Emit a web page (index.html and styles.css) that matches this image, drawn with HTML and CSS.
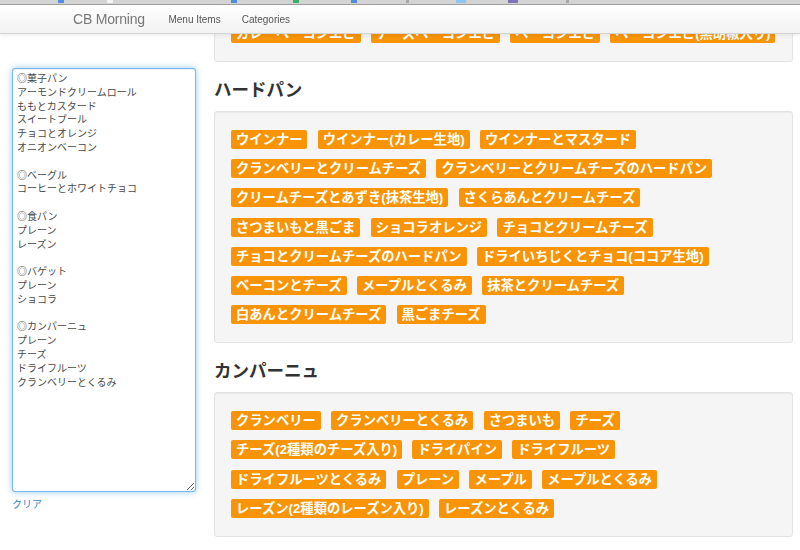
FILE: index.html
```html
<!DOCTYPE html>
<html lang="ja">
<head>
<meta charset="utf-8">
<title>CB Morning</title>
<link rel="stylesheet" href="styles.css">
</head>
<body>
<div class="chrome">
  <span class="bm bm-blue b1"></span>
  <span class="bm bm-white b2"></span>
  <span class="bm bm-blue b3"></span>
  <span class="bm bm-green b4"></span>
  <span class="bm bm-blue b5"></span>
  <span class="bm bm-gray b6"></span>
  <span class="bm bm-lblue b7"></span>
  <span class="bm bm-purple b8"></span>
  <span class="bm bm-gray b9"></span>
</div>
<nav class="navbar">
  <a class="brand" href="#">CB Morning</a>
  <a class="nav-link" href="#">Menu Items</a>
  <a class="nav-link" href="#">Categories</a>
</nav>
<div class="page">
  <aside class="sidebar">
    <textarea class="memo">◎菓子パン
アーモンドクリームロール
ももとカスタード
スイートブール
チョコとオレンジ
オニオンベーコン

◎ベーグル
コーヒーとホワイトチョコ

◎食パン
プレーン
レーズン

◎バゲット
プレーン
ショコラ

◎カンパーニュ
プレーン
チーズ
ドライフルーツ
クランベリーとくるみ</textarea>
    <a class="clear" href="#">クリア</a>
  </aside>
  <main class="main">
    <div class="well">
      <span class="label">カレーベーコンエピ</span>
      <span class="label">チーズベーコンエピ</span>
      <span class="label">ベーコンエピ</span>
      <span class="label">ベーコンエピ(黒胡椒入り)</span>
    </div>
    <h3 class="section-title">ハードパン</h3>
    <div class="well">
      <span class="label">ウインナー</span>
      <span class="label">ウインナー(カレー生地)</span>
      <span class="label">ウインナーとマスタード</span>
      <span class="label">クランベリーとクリームチーズ</span>
      <span class="label">クランベリーとクリームチーズのハードパン</span>
      <span class="label">クリームチーズとあずき(抹茶生地)</span>
      <span class="label">さくらあんとクリームチーズ</span>
      <span class="label">さつまいもと黒ごま</span>
      <span class="label">ショコラオレンジ</span>
      <span class="label">チョコとクリームチーズ</span>
      <span class="label">チョコとクリームチーズのハードパン</span>
      <span class="label">ドライいちじくとチョコ(ココア生地)</span>
      <span class="label">ベーコンとチーズ</span>
      <span class="label">メープルとくるみ</span>
      <span class="label">抹茶とクリームチーズ</span>
      <span class="label">白あんとクリームチーズ</span>
      <span class="label">黒ごまチーズ</span>
    </div>
    <h3 class="section-title">カンパーニュ</h3>
    <div class="well">
      <span class="label">クランベリー</span>
      <span class="label">クランベリーとくるみ</span>
      <span class="label">さつまいも</span>
      <span class="label">チーズ</span>
      <span class="label">チーズ(2種類のチーズ入り)</span>
      <span class="label">ドライパイン</span>
      <span class="label">ドライフルーツ</span>
      <span class="label">ドライフルーツとくるみ</span>
      <span class="label">プレーン</span>
      <span class="label">メープル</span>
      <span class="label">メープルとくるみ</span>
      <span class="label">レーズン(2種類のレーズン入り)</span>
      <span class="label">レーズンとくるみ</span>
    </div>
  </main>
</div>
</body>
</html>
```
FILE: styles.css
```css
html, body {
  margin: 0;
  padding: 0;
  background: #ffffff;
}
body {
  font-family: "Liberation Sans", "Noto Sans CJK JP", sans-serif;
  color: #333333;
}

/* top browser strip */
.chrome {
  position: fixed;
  top: 0;
  left: 0;
  right: 0;
  height: 4px;
  background: #d3d3d3;
  border-bottom: 1px solid #9e9e9e;
  z-index: 20;
}
.bm {
  position: absolute;
  top: 0;
  height: 3px;
  width: 6px;
}
.bm-blue { background: #4f8fe0; }
.bm-white { background: #f4f4f4; }
.bm-green { background: #3bb06a; }
.bm-gray { background: #a9a9a9; }
.bm-lblue { background: #8fc4ee; }
.bm-purple { background: #7d74b8; }
.b1 { left: 58px; }
.b2 { left: 107px; }
.b3 { left: 231px; }
.b4 { left: 293px; }
.b5 { left: 351px; }
.b6 { left: 406px; width: 3px; }
.b7 { left: 456px; width: 10px; }
.b8 { left: 508px; width: 10px; }
.b9 { left: 566px; width: 3px; }

/* navbar */
.navbar {
  position: fixed;
  top: 5px;
  left: 0;
  right: 0;
  height: 28px;
  display: flex;
  align-items: center;
  padding-left: 73px;
  background: linear-gradient(#ffffff, #f2f2f2);
  border-bottom: 1px solid #d4d4d4;
  box-shadow: 0 1px 5px rgba(0, 0, 0, 0.09);
  z-index: 10;
}
.brand {
  font-size: 14px;
  color: #777777;
  text-decoration: none;
  margin-right: 13px;
  letter-spacing: -0.2px;
}
.nav-link {
  font-size: 10px;
  color: #555555;
  text-decoration: none;
  padding: 0 10.5px;
}

/* page layout */
.page {
  display: flex;
  align-items: flex-start;
  gap: 18px;
  padding: 0 7px 0 12px;
  margin-top: 5px;
}
.sidebar {
  width: 184px;
  flex: none;
  padding-top: 63px;
  display: flex;
  flex-direction: column;
}
.memo {
  box-sizing: border-box;
  width: 184px;
  height: 424px;
  margin: 0;
  padding: 3px 4px;
  font-family: "Liberation Sans", "Noto Sans CJK JP", sans-serif;
  font-size: 10px;
  line-height: 13.8px;
  color: #4a4a4a;
  border: 1px solid rgba(82, 168, 236, 0.8);
  border-radius: 3px;
  box-shadow: inset 0 1px 1px rgba(0, 0, 0, 0.075), 0 0 6px rgba(82, 168, 236, 0.6);
  outline: none;
  resize: both;
}
.clear {
  margin-top: 6px;
  font-size: 10px;
  line-height: 14px;
  color: #3385c6;
  text-decoration: none;
}

.main {
  flex: 1;
  min-width: 0;
}
.well {
  display: flex;
  flex-wrap: wrap;
  gap: 10.2px 10.3px;
  padding: 18px 16px;
  background: #f5f5f5;
  border: 1px solid #e3e3e3;
  border-radius: 3px;
  box-shadow: inset 0 1px 1px rgba(0, 0, 0, 0.05);
}
.section-title {
  margin: 18px 0 11px;
  font-size: 17.5px;
  line-height: 20px;
  font-weight: bold;
  color: #333333;
}
.label {
  display: inline-block;
  padding: 2px 5px;
  font-size: 13.3px;
  line-height: 15px;
  font-weight: bold;
  color: #ffffff;
  background: #f89406;
  border-radius: 2px;
  white-space: nowrap;
}
```
